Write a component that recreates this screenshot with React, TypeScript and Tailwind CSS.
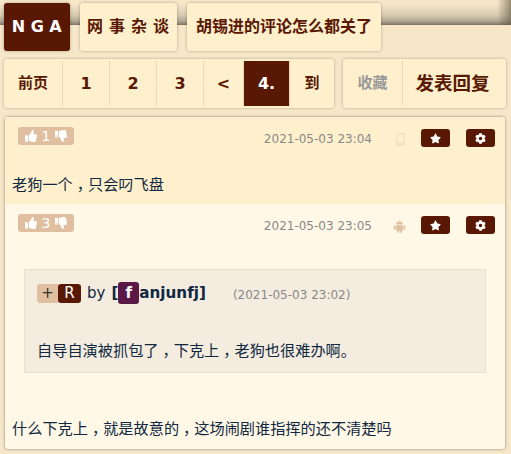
import { FaThumbsUp, FaThumbsDown, FaStar, FaCog, FaMobileAlt } from "react-icons/fa";

// the reference's comma sits in the middle of its cell, not at the left
function Comma() {
  return <span className="pl-[4px] tracking-[-4px]">，</span>;
}

function AndroidIcon({ className }: { className: string }) {
  return (
    <svg viewBox="0 0 24 24" className={className} fill="currentColor">
      <path d="M6 8.5a6 6 0 0 1 12 0z" />
      <path d="M6 9.5h12v9a1.5 1.5 0 0 1-1.5 1.5H7.500A1.500 1.500 0 0 1 6 18.500z" />
      <rect x="1.500" y="9.500" width="3.200" height="8.500" rx="1.600" />
      <rect x="19.300" y="9.500" width="3.200" height="8.500" rx="1.600" />
      <rect x="8" y="18" width="3" height="6" rx="1.500" />
      <rect x="13" y="18" width="3" height="6" rx="1.500" />
    </svg>
  );
}

function Votes({ count }: { count: number }) {
  return (
    <div className="flex h-[18px] w-[56px] items-center justify-center gap-[5px] rounded-[3px] bg-[#dfbf9f] text-[14px] text-white">
      <FaThumbsUp className="h-[12px] w-[12px]" />
      <span>{count}</span>
      <FaThumbsDown className="h-[12px] w-[12px]" />
    </div>
  );
}

function PostHead({ count, time, device }: { count: number; time: string; device: React.ReactNode }) {
  return (
    <div className="flex h-[20px] items-start">
      <div className="ml-[13px]">
        <Votes count={count} />
      </div>
      <div className="ml-auto flex items-start">
        <span className="text-[12px] leading-[24px] text-[#888888]">{time}</span>
        {device}
        <button className="ml-[14px] mt-[2px] flex h-[18px] w-[29px] items-center justify-center rounded-[3px] bg-[#591804] text-white">
          <FaStar className="h-[11px] w-[11px]" />
        </button>
        <button className="ml-[16px] mr-[10px] mt-[2px] flex h-[18px] w-[29px] items-center justify-center rounded-[3px] bg-[#591804] text-white">
          <FaCog className="h-[11px] w-[11px]" />
        </button>
      </div>
    </div>
  );
}

function PageCell({ label, className }: { label: string; className: string }) {
  return <div className={`flex h-[45px] items-center justify-center font-bold ${className}`}>{label}</div>;
}

export default function App() {
  return (
    <div className="h-[454px] w-[511px] overflow-hidden bg-[#f6e7c9] bg-[linear-gradient(to_left,rgba(90,80,60,0.6),transparent_14px),linear-gradient(to_bottom,#f6e7c9_15%,#d8cbb1_60%,#b0a691_85%,#7a7364_100%)] bg-[length:100%_25px] bg-no-repeat font-['DejaVu_Sans','Noto_Sans_CJK_SC',sans-serif]">
      <nav className="flex gap-[10px] pb-[8px] pl-[4px] pt-[3px]">
        <div className="flex h-[48px] w-[66px] items-center justify-center rounded-[3px] bg-[#591804] pl-[5px] text-[16px] font-bold tracking-[5.500px] text-white shadow-[0_0_3px_rgba(0,0,0,0.3)]">
          NGA
        </div>
        <div className="flex h-[48px] w-[97px] items-center justify-center rounded-[3px] bg-[#fff0cd] pl-[5px] text-[16px] font-semibold tracking-[6px] text-[#591804] shadow-[0_0_3px_rgba(0,0,0,0.3)]">
          网事杂谈
        </div>
        <div className="flex h-[48px] w-[194px] items-center justify-center rounded-[3px] bg-[#fff0cd] text-[16px] font-semibold text-[#591804] shadow-[0_0_3px_rgba(0,0,0,0.3)]">
          胡锡进的评论怎么都关了
        </div>
      </nav>

      <div className="flex pl-[4px]">
        <div className="flex h-[49px] w-[330px] items-center divide-x divide-[#ecd9b8] rounded-[3px] bg-[#fff0cd] text-[#591804] shadow-[0_0_3px_rgba(0,0,0,0.3)]">
          <PageCell label="前页" className="w-[59px] text-[15px]" />
          <PageCell label="1" className="w-[47px] text-[16px]" />
          <PageCell label="2" className="w-[47px] text-[16px]" />
          <PageCell label="3" className="w-[47px] text-[16px]" />
          <PageCell label="<" className="w-[40px] text-[16px]" />
          <div className="flex h-[45px] w-[46px] items-center justify-center bg-[#591804] text-[16px] font-bold text-white">4.</div>
          <PageCell label="到" className="w-[44px] text-[15px]" />
        </div>
        <div className="ml-[9px] flex h-[49px] w-[163px] items-center divide-x divide-[#ecd9b8] rounded-[3px] bg-[#fff0cd] shadow-[0_0_3px_rgba(0,0,0,0.3)]">
          <PageCell label="收藏" className="w-[60px] text-[15px] text-[#999999]" />
          <PageCell label="发表回复" className="w-[103px] pr-[4px] text-[18.500px] text-[#591804]" />
        </div>
      </div>

      <main className="ml-[5px] mt-[9px] h-[332px] w-[500px] overflow-hidden rounded-[3px] bg-[#fff8e7] text-[15.200px] text-[#10273f] shadow-[0_0_3px_rgba(0,0,0,0.45)]">
        <section className="h-[87px] bg-[#fff0cd] pt-[10px]">
          <PostHead
            count={1}
            time="2021-05-03 23:04"
            device={<FaMobileAlt className="ml-[22px] mt-[6px] h-[13px] w-[13px] text-[#f0dfc0]" />}
          />
          <p className="ml-[7px] mt-[28px] leading-[20px]">老狗一个<Comma />只会叼飞盘</p>
        </section>

        <section className="pt-[10px]">
          <PostHead
            count={3}
            time="2021-05-03 23:05"
            device={<AndroidIcon className="ml-[21px] mr-[1px] mt-[6px] h-[13px] w-[13px] text-[#dfbf9f]" />}
          />
          <blockquote className="ml-[19px] mt-[35px] h-[104px] w-[462px] border border-[#e8dfd0] bg-[#f3ecdf] pl-[12px] pt-[12px]">
            <div className="flex h-[22px] items-center text-[15px]">
              <span className="flex h-[19px] w-[21px] items-center justify-center rounded-l-[3px] bg-[#dfbf9f] text-[#333333]">+</span>
              <span className="flex h-[19px] w-[23px] items-center justify-center rounded-[3px] bg-[#591804] text-white">R</span>
              <span className="ml-[6px]">by</span>
              <span className="ml-[6px] font-bold">[</span>
              <span className="flex h-[22px] w-[21px] items-center justify-center rounded-[3px] bg-[#591845] font-bold text-white">f</span>
              <span className="text-[15.200px] font-bold">anjunfj]</span>
              <span className="ml-[27px] mt-[4px] text-[12px] text-[#888888]">(2021-05-03 23:02)</span>
            </div>
            <p className="mt-[37px] leading-[20px]">自导自演被抓包了<Comma />下克上<Comma />老狗也很难办啊。</p>
          </blockquote>
          <p className="ml-[7px] mt-[46px] leading-[20px]">什么下克上<Comma />就是故意的<Comma />这场闹剧谁指挥的还不清楚吗</p>
        </section>
      </main>
    </div>
  );
}
